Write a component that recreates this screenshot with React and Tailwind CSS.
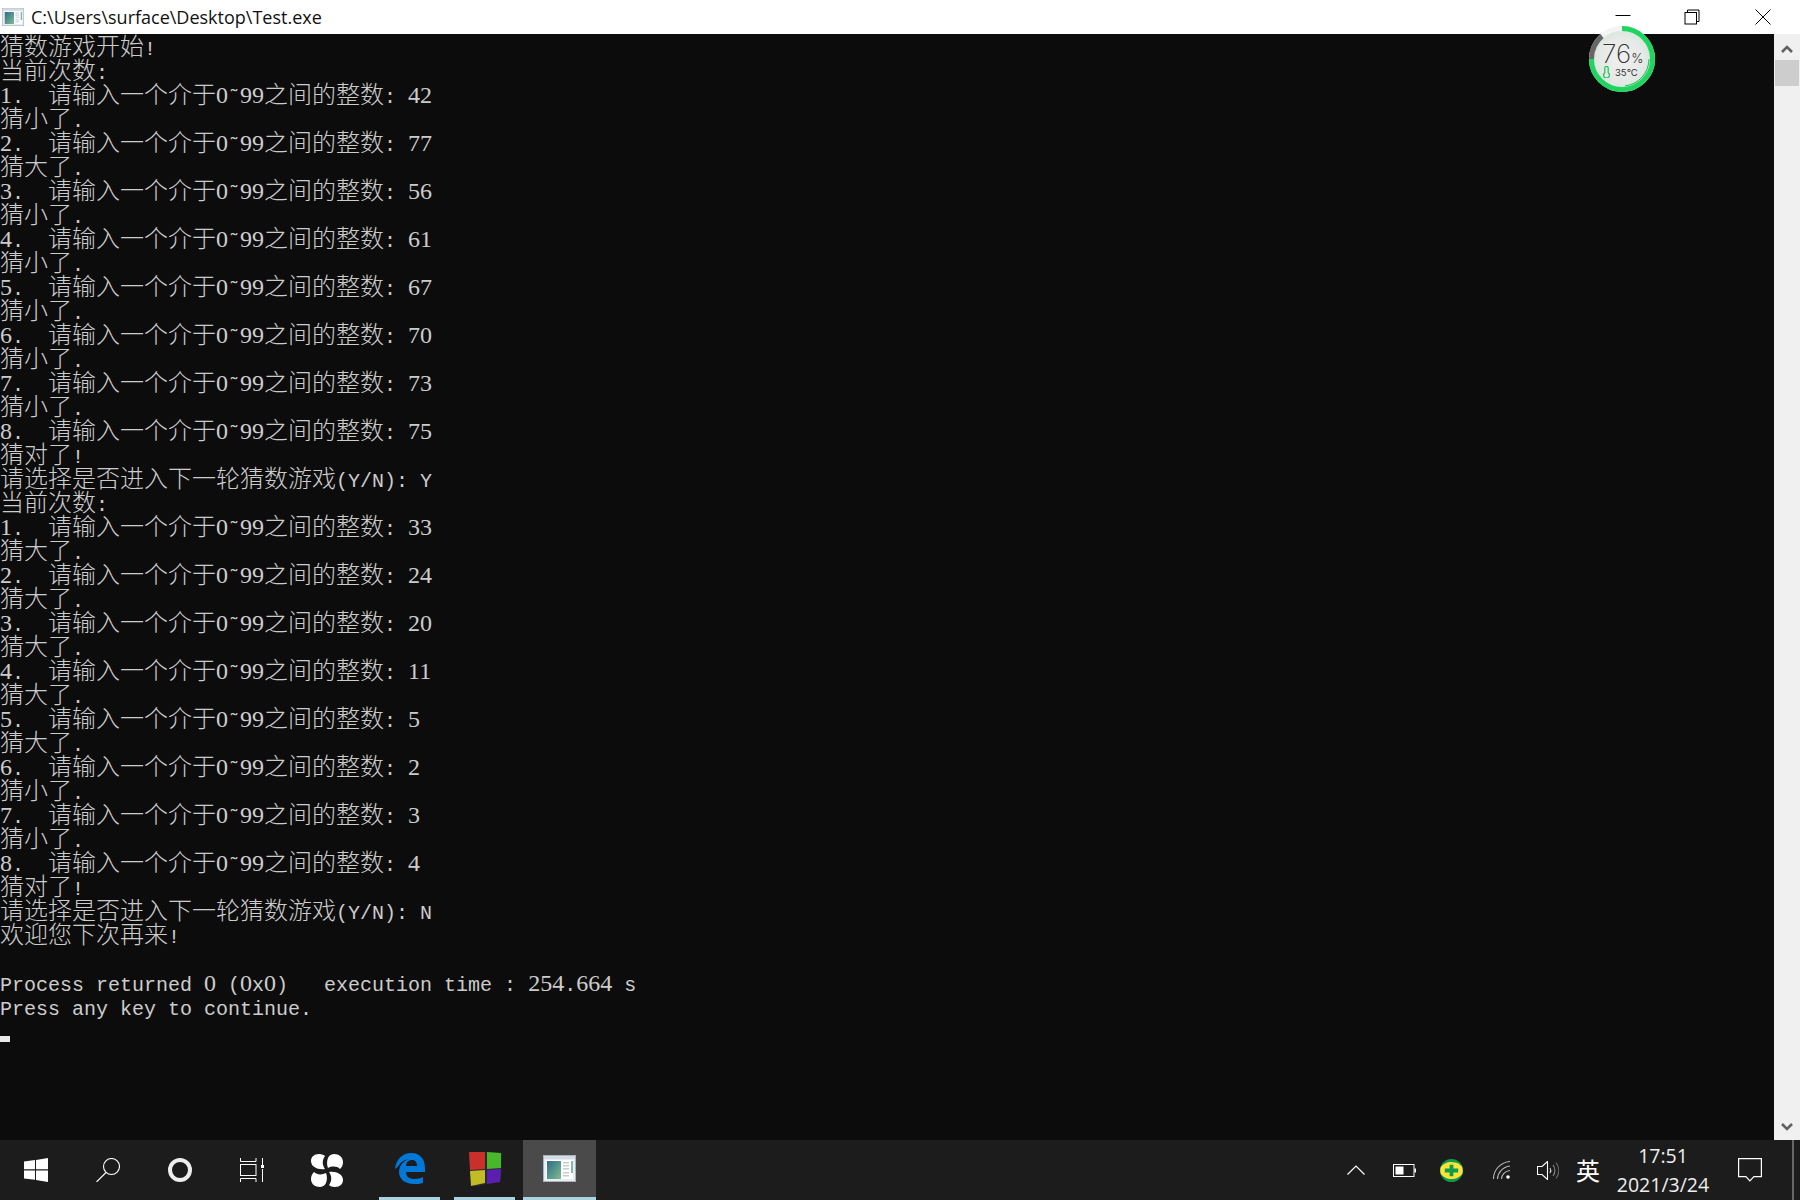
import React from "react";

const FIRST_ROUND = [
  ["42", "猜小了."],
  ["77", "猜大了."],
  ["56", "猜小了."],
  ["61", "猜小了."],
  ["67", "猜小了."],
  ["70", "猜小了."],
  ["73", "猜小了."],
  ["75", "猜对了!"],
];

const SECOND_ROUND = [
  ["33", "猜大了."],
  ["24", "猜大了."],
  ["20", "猜大了."],
  ["11", "猜大了."],
  ["5", "猜大了."],
  ["2", "猜小了."],
  ["3", "猜小了."],
  ["4", "猜对了!"],
];

function roundLines(round) {
  return round.flatMap(([guess, result], i) => [
    `${i + 1}.  请输入一个介于0˜99之间的整数: ${guess}`,
    result,
  ]);
}

const LINES = [
  "猜数游戏开始!",
  "当前次数:",
  ...roundLines(FIRST_ROUND),
  "请选择是否进入下一轮猜数游戏(Y/N): Y",
  "当前次数:",
  ...roundLines(SECOND_ROUND),
  "请选择是否进入下一轮猜数游戏(Y/N): N",
  "欢迎您下次再来!",
  "",
  "Process returned 0 (0x0)   execution time : 254.664 s",
  "Press any key to continue.",
];

// 汉字占两格(24px),ASCII 占一格(12px),跟控制台的网格对齐
function ConsoleLine({ text }) {
  const runs = text.match(/[\u4e00-\u9fff]+|[0-9]+|[^\u4e00-\u9fff0-9]+/g) || [];
  return (
    <div className="h-6 whitespace-pre font-['Noto_Sans_CJK_SC',sans-serif] text-[24px] font-light leading-[22px]">
      {runs.map((run, i) => {
        if (/[\u4e00-\u9fff]/.test(run)) return <span key={i}>{run}</span>;
        if (/[0-9]/.test(run)) {
          // Liberation Serif 24px 的数字正好 12px 宽
          return (
            <span key={i} className="font-['Liberation_Serif',serif] text-[24px] font-normal">
              {run}
            </span>
          );
        }
        return (
          <span key={i} className="font-['Liberation_Mono',monospace] text-[20px] font-normal">
            {run}
          </span>
        );
      })}
    </div>
  );
}

function AppIcon({ className, id }) {
  return (
    <svg viewBox="0 0 33 27" className={className}>
      <defs>
        <linearGradient id={id} x1="0" y1="0" x2="1" y2="1">
          <stop offset="0" stopColor="#2c6c8c" />
          <stop offset="1" stopColor="#7fbd8c" />
        </linearGradient>
      </defs>
      <rect x="0.5" y="0.5" width="32" height="26" fill="#e9edf2" stroke="#a9b3c0" />
      <rect x="1" y="1" width="31" height="3" fill="#d5dbe3" />
      <rect x="3" y="5" width="27" height="19" fill="#fff" />
      <rect x="4" y="6" width="14" height="18" fill={`url(#${id})`} />
      <rect x="20" y="7" width="6" height="1.5" fill="#c5ccd6" />
      <rect x="20" y="10" width="6" height="1.5" fill="#c5ccd6" />
      <rect x="20" y="13" width="6" height="1.5" fill="#c5ccd6" />
      <rect x="20" y="17" width="6" height="1.5" fill="#c5ccd6" />
      <rect x="20" y="20" width="6" height="1.5" fill="#c5ccd6" />
      <rect x="28" y="6" width="2" height="12" fill="#7fbd9c" />
    </svg>
  );
}

function TitleBar() {
  return (
    <div className="flex h-[34px] shrink-0 items-center bg-white pl-[2px]">
      <AppIcon id="titlePane" className="h-[18px] w-[22px]" />
      <span className="ml-[7px] font-['Open_Sans',sans-serif] text-[18px] text-[#111]">
        C:\Users\surface\Desktop\Test.exe
      </span>
      <div className="ml-auto flex items-center pr-[29px]">
        <svg viewBox="0 0 16 16" className="h-4 w-4 text-black" fill="none" stroke="currentColor">
          <path d="M0.5 6.500h15" />
        </svg>
        <svg viewBox="0 0 16 16" className="ml-[53px] h-4 w-4 text-black" fill="none" stroke="currentColor">
          <path d="M3.5 3.500v-2.500h11.500v11.500h-2.500" />
          <rect x="1" y="3.500" width="11.500" height="11.500" />
        </svg>
        <svg viewBox="0 0 16 16" className="ml-[55px] h-4 w-4 text-black" fill="none" stroke="currentColor">
          <path d="M0.5 0.500l15 15M15.500 0.500l-15 15" />
        </svg>
      </div>
    </div>
  );
}

function Scrollbar() {
  return (
    <div className="flex w-[26px] shrink-0 flex-col items-center bg-[#f0f0f0] px-[1px]">
      <div className="flex h-[26px] items-center justify-center pt-1">
        <svg viewBox="0 0 12 8" className="h-[8px] w-[12px]" fill="none" stroke="#606060" strokeWidth="2.6">
          <path d="M1 7l5-5 5 5" />
        </svg>
      </div>
      <div className="h-[26px] w-full bg-[#cdcdcd]" />
      <div className="flex-1" />
      <div className="flex h-[26px] items-center justify-center">
        <svg viewBox="0 0 12 8" className="h-[8px] w-[12px]" fill="none" stroke="#606060" strokeWidth="2.6">
          <path d="M1 1l5 5 5-5" />
        </svg>
      </div>
    </div>
  );
}

// 悬浮的电池/温度小球
function BatteryBall() {
  return (
    <div className="absolute left-[1589px] top-[26px] h-[66px] w-[66px]">
      <svg viewBox="0 0 66 66" className="absolute inset-0 h-full w-full">
        <defs>
          <radialGradient id="ballFill">
            <stop offset="0" stopColor="#f0f0f0" />
            <stop offset="0.7" stopColor="#e6e9e6" />
            <stop offset="1" stopColor="#d3e6d9" />
          </radialGradient>
        </defs>
        <circle cx="33" cy="33" r="31" fill="url(#ballFill)" />
        <circle cx="33" cy="33" r="30.500" fill="none" stroke="#f4f4f4" strokeWidth="5" />
        <path d="M2.500 33A30.500 30.500 0 0 1 13 10" fill="none" stroke="#666" strokeWidth="5" />
        <path d="M33 2.500a30.500 30.500 0 1 1-30.500 30.500" fill="none" stroke="#1fd45f" strokeWidth="5" />
        <path d="M36 60a27.200 27.200 0 0 0 24-27" fill="none" stroke="#17b954" strokeWidth="1" />
      </svg>
      <div className="absolute left-[13px] top-[13px] flex items-baseline font-['Inter',sans-serif] font-extralight text-[#333]">
        <span className="text-[26px] leading-[30px]">76</span>
        <span className="text-[13px] font-light">%</span>
      </div>
      <svg viewBox="0 0 10 14" className="absolute left-[13px] top-[40px] h-[12px] w-[9px]" fill="none" stroke="#16c458" strokeWidth="1.4">
        <path d="M3 8V2.500a2 2 0 0 1 4 0V8a3.400 3.400 0 1 1-4 0z" />
      </svg>
      <span className="absolute left-[26px] top-[41px] font-['Inter',sans-serif] text-[9.5px] leading-[12px] text-[#333]">
        35°C
      </span>
    </div>
  );
}

function WindowsLogo() {
  return (
    <svg viewBox="0 0 24 24" className="h-6 w-6" fill="#fff">
      <path d="M0 3.600l11-1.500v9.200H0zM12 1.900L24 0v11.300H12zM0 12.500h11v9.300L0 20.400zM12 12.500h12V24l-12-2z" />
    </svg>
  );
}

function SearchIcon() {
  return (
    <svg viewBox="0 0 24 24" className="h-6 w-6" fill="none" stroke="#fff" strokeWidth="1.1">
      <circle cx="15.500" cy="8.500" r="8" />
      <path d="M10 14.500L0.500 24" />
    </svg>
  );
}

function TaskViewIcon() {
  return (
    <svg viewBox="0 0 25 24" className="h-6 w-[25px]" fill="none" stroke="#fff" strokeWidth="1">
      <path d="M0.500 0v3.500h15.500V0M0.500 24v-3.500h15.500V24" />
      <rect x="0.500" y="6.500" width="15.500" height="11" />
      <path d="M22.500 0v7M22.500 11v13" />
      <rect x="21" y="7" width="3" height="3" fill="#fff" stroke="none" />
    </svg>
  );
}

function PinwheelIcon() {
  return (
    <svg viewBox="0 0 32 33" className="h-[33px] w-[32px]" fill="#fff">
      <path d="M14 15C7 16 0 13 0 7c0-4 3-7 8-7 3 0 5 1 6 2-3 4-3 9 0 13z" />
      <path d="M17 14c-2-5-1-14 6-14 5 0 9 3 9 8 0 3-1 5-3 7-3-3-8-3-12-1z" />
      <path d="M18 18c7-1 14 2 14 8 0 4-3 7-8 7-3 0-5-1-6-2 3-4 3-9 0-13z" />
      <path d="M15 19c2 5 1 14-6 14-5 0-9-3-9-8 0-3 1-5 3-7 3 3 8 3 12 1z" />
    </svg>
  );
}

function EdgeIcon() {
  return (
    <svg viewBox="0 0 30 31" className="h-[31px] w-[30px]">
      <path
        fill="#0078d7"
        d="M0 16C1 6 8 0 16 0c9 0 14 6 14 15v4H11c0 5 4 7 8 7 4 0 7-1 9-2v6c-3 1-6 1-9 1-9 0-15-5-15-12 0-3 1-5 2-7 2-3 5-5 8-6-4 .5-8 3-10 6-1 2-3 3-4 4zM11 13h11c0-4-2-6-5-6-3 0-6 2-6 6z"
      />
    </svg>
  );
}

function ColorCubeIcon() {
  return (
    <svg viewBox="0 0 34 36" className="h-9 w-[34px]">
      <path fill="#2a2a2a" d="M1 2l16-1 17 1-1 27-26 7-5-18z" />
      <path fill="#c9302a" d="M1 1l16 0v17l-15 1z" />
      <path fill="#46b82a" d="M19 1l14 1v15l-14 1z" />
      <path fill="#c2bd27" d="M2 20l15-1v13l-14 3z" />
      <path fill="#5a1fb0" d="M19 19l14-1-1 13-13 2z" />
    </svg>
  );
}

function Taskbar() {
  return (
    <div className="relative flex h-[60px] shrink-0 items-stretch bg-[#1c1c1c]">
      <div className="flex w-[72px] items-center justify-center"><WindowsLogo /></div>
      <div className="flex w-[72px] items-center justify-center"><SearchIcon /></div>
      <div className="flex w-[72px] items-center justify-center">
        <div className="h-6 w-6 rounded-full border-[4px] border-[#eee]" />
      </div>
      <div className="flex w-[72px] items-center justify-center"><TaskViewIcon /></div>
      <div className="flex w-[78px] items-center justify-center"><PinwheelIcon /></div>
      <div className="ml-[13px] flex w-[61px] items-center justify-center border-b-[3px] border-[#a9d3df]"><EdgeIcon /></div>
      <div className="ml-[14px] flex w-[61px] items-center justify-center border-b-[3px] border-[#a9d3df]"><ColorCubeIcon /></div>
      <div className="ml-[8px] flex w-[73px] items-center justify-center border-b-[3px] border-[#a9d3df] bg-[#4a4a4a]">
        <AppIcon id="taskPane" className="h-[27px] w-[33px]" />
      </div>

      <div className="ml-auto flex items-center pr-[38px] text-white">
        <svg viewBox="0 0 18 10" className="mr-[28px] h-[10px] w-[18px]" fill="none" stroke="#fff" strokeWidth="1.2">
          <path d="M0.500 9.500L9 1l8.500 8.500" />
        </svg>
        <svg viewBox="0 0 23 13" className="mr-[24px] h-[13px] w-[23px]" fill="none" stroke="#fff">
          <rect x="0.500" y="0.500" width="20.500" height="12" />
          <rect x="2.500" y="2.500" width="8" height="8" fill="#fff" stroke="none" />
          <rect x="21.500" y="4.500" width="1.500" height="4" fill="#fff" stroke="none" />
        </svg>
        <svg viewBox="0 0 24 24" className="mr-[30px] h-[23px] w-[23px]">
          <circle cx="12" cy="12" r="12" fill="#0f9b4a" />
          <path d="M1 8c4-5 10-6 16-4 3 1 5 3 6 4 1 3 1 6 0 8-4 5-10 6-16 4-3-1-5-3-6-4-1-3-1-6 0-8z" fill="#ffe23a" />
          <path d="M10 6h4v4h5v4h-5v4h-4v-4H5v-4h5z" fill="#0f9b4a" />
        </svg>
        <svg viewBox="0 0 17 18" className="mr-[27px] h-[18px] w-[17px]" fill="none" stroke="#b9b9b9" strokeWidth="1.1">
          <path d="M0.500 18C0.500 9 7 1.500 17 0.500M4.500 18c0-6 5-12 12.500-13M8.500 18c0-4 3.500-8 8.500-8.500" />
          <circle cx="15" cy="16" r="1.800" fill="#fff" stroke="none" />
        </svg>
        <svg viewBox="0 0 22 19" className="mr-[17px] h-[19px] w-[22px]" fill="none" stroke="#d0d0d0" strokeWidth="1.1">
          <path d="M0.500 5.500h4.500L10.500 0.500v18L5 13.500H0.500z" stroke="#fff" />
          <path d="M13 7c1 1.500 1 3.500 0 5" />
          <path d="M16 4c2.500 3 2.500 8 0 11" stroke="#888" />
          <path d="M19 1.500c3.500 5 3.500 11 0 16" stroke="#666" />
        </svg>
        <span className="mr-[16px] font-['Noto_Sans_CJK_SC',sans-serif] text-[24px] leading-none">英</span>
        <div className="mr-[28px] flex w-[94px] flex-col items-center font-['Open_Sans',sans-serif] text-[19.5px] leading-[29px] text-[#eee]">
          <span>17:51</span>
          <span>2021/3/24</span>
        </div>
        <svg viewBox="0 0 24 24" className="h-6 w-6" fill="none" stroke="#fff" strokeWidth="1.2">
          <path d="M0.600 0.600h22.800v18h-7.500l-4 4.200-4-4.200H0.600z" />
        </svg>
      </div>
      <div className="absolute right-[6px] top-0 h-full w-[2px] bg-[#666]" />
    </div>
  );
}

export default function App() {
  return (
    <div className="relative flex h-[1200px] w-[1800px] flex-col overflow-hidden">
      <TitleBar />
      <div className="flex min-h-0 flex-1">
        <div className="flex-1 bg-[#0c0c0c] text-[#cccccc]">
          {LINES.map((text, i) => (
            <ConsoleLine key={i} text={text} />
          ))}
          <div className="flex h-6 items-end">
            <div className="h-[6px] w-[10px] bg-[#e8e8e8]" />
          </div>
        </div>
        <Scrollbar />
      </div>
      <Taskbar />
      <BatteryBall />
    </div>
  );
}
